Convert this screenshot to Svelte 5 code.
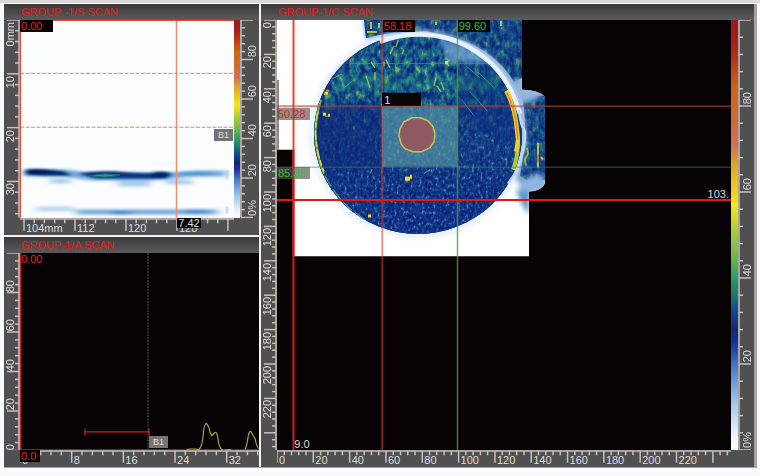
<script>
  const range = (from, to, step) => {
    const out = [];
    for (let i = 0; from + i * step <= to + 1e-6; i++) out.push(from + i * step);
    return out;
  };

  const axis = (side, min, max, first, major, parts, labels, flip = false) => {
    const at = (v) => {
      const p = ((v - min) / (max - min)) * 100;
      return flip ? 100 - p : p;
    };
    return {
      side,
      flip,
      ticks: range(first, max, major / parts).map((v, i) => ({ p: at(v), major: i % parts === 0 })),
      labels: labels.map(([v, text]) => ({ p: at(v), text: text ?? String(v) }))
    };
  };

  const plain = (values) => values.map((v) => [v]);

  const sDepth = axis('left', 0, 36.7, 0, 10, 5, [[0, '0mm'], [10], [20], [30]]);
  const sIndex = axis('bottom', 103.37, 136.95, 104, 8, 5, [[104, '104mm'], [112], [120], [128]]);
  const sAmp = axis('right', 0, 100, 0, 20, 5, [[0, '0%'], [20], [40], [60], [80]], true);
  const aAmp = axis('left', 0, 100, 0, 20, 5, plain([0, 20, 40, 60, 80]), true);
  const aPath = axis('bottom', 0, 37, 0, 8, 5, plain([0, 8, 16, 24, 32]));
  const cIndex = axis('left', 0, 250, 0, 20, 5, plain(range(0, 220, 20)));
  const cScan = axis('bottom', 0, 250, 0, 20, 5, plain(range(0, 220, 20)));
  const cAmp = axis('right', 0, 100, 0, 20, 5, [[0, '0%'], [20], [40], [60], [80]], true);
</script>

{#snippet ruler(a)}
  <div class="ruler {a.side}" class:flip={a.flip}>
    {#if a.side === 'bottom'}
      <svg viewBox="0 0 100 16" preserveAspectRatio="none" aria-hidden="true">
        <path d="M0 1H100" />
        {#each a.ticks as t}
          <path d="M{t.p} 1V{t.major ? 12 : 5}" />
        {/each}
      </svg>
      {#each a.labels as l}
        <span style="left: {l.p}%">{l.text}</span>
      {/each}
    {:else}
      <svg viewBox="0 0 16 100" preserveAspectRatio="none" aria-hidden="true">
        <path d={a.side === 'left' ? 'M15 0V100' : 'M1 0V100'} />
        {#each a.ticks as t}
          {#if a.side === 'left'}
            <path d="M15 {t.p}H{t.major ? 3 : 11}" />
          {:else}
            <path d="M1 {t.p}H{t.major ? 13 : 5}" />
          {/if}
        {/each}
      </svg>
      {#each a.labels as l}
        <span style={a.flip ? `bottom: ${100 - l.p}%` : `top: ${l.p}%`}>{l.text}</span>
      {/each}
    {/if}
  </div>
{/snippet}

<main class="page">
  <div class="frame">
    <div class="column">
      <section class="panel s-scan">
        <h2>GROUP -1/S SCAN</h2>
        {@render ruler(sDepth)}
        <div class="plot light">
          <svg viewBox="20 20 214 198" preserveAspectRatio="none" aria-hidden="true">
            <defs>
              <filter id="soft" x="-20%" y="-80%" width="140%" height="260%"><feGaussianBlur stdDeviation="4 1.6" /></filter>
              <filter id="soft2" x="-20%" y="-80%" width="140%" height="260%"><feGaussianBlur stdDeviation="2.5 1" /></filter>
            </defs>
            <g filter="url(#soft)">
              <path d="M24 170H68L88 173H170L196 171H226V177H196L150 181H90L64 177H24Z" fill="#6fabdf" />
              <path d="M50 179H70V184H50ZM118 181H150V187H118ZM166 180H192V185H166Z" fill="#a9cbe9" />
              <path d="M36 207H74V212H36Z" fill="#bcd8f0" />
              <path d="M76 210H130L176 210H218V215H176L130 215H76Z" fill="#74abde" />
              <ellipse cx="121" cy="213" rx="12" ry="2" fill="#3d86cb" />
              <ellipse cx="196" cy="212" rx="14" ry="2" fill="#3d86cb" />
              <ellipse cx="165" cy="163" rx="8" ry="1" fill="#eaf3fb" />
            </g>
            <g filter="url(#soft2)">
              <path d="M26 170Q40 168 64 172L72 176L44 176L26 175Z" fill="#062567" />
              <path d="M78 174Q104 170 128 173L150 174Q160 170 172 174L166 179H148L124 179H96Z" fill="#07307c" />
              <ellipse cx="38" cy="172.500" rx="11" ry="2.200" fill="#041c58" />
              <ellipse cx="160" cy="176" rx="9" ry="2.400" fill="#05205f" />
              <ellipse cx="196" cy="174" rx="18" ry="1.200" fill="#4a90d2" />
            </g>
            <path d="M90 176Q104 173 120 175.500Q104 179 90 176Z" fill="#2fa45f" stroke="#176c78" stroke-width="1" />
            <path d="M227 171V180M227 207V214" stroke="#a9cbe9" stroke-width="3" opacity="0.6" />
            <path d="M20 73.500H233M20 127.500H233" stroke="#f5795c" stroke-dasharray="4 1.500" />
            <path d="M176.500 20V218" stroke="#f58a68" stroke-width="1.500" />
            <path d="M20 20.500H234M20.500 20V218" stroke="#ee4a33" />
          </svg>
          <span class="tag red dark s-zero">0.00</span>
          <span class="gate s-gate">B1</span>
        </div>
        <div class="scale"></div>
        {@render ruler(sAmp)}
        <div class="foot">{@render ruler(sIndex)}<span class="tag white dark s-cursor">7.42</span></div>
      </section>

      <section class="panel a-scan">
        <h2>GROUP-1/A SCAN</h2>
        {@render ruler(aAmp)}
        <div class="plot">
          <svg viewBox="20 253 239 197" preserveAspectRatio="none" aria-hidden="true">
            <path d="M148 253V450" stroke="#54585a" stroke-dasharray="2 1" />
            <path d="M85 431.500H149M85 428V435M149 428V435" stroke="#c8201f" stroke-width="1.300" fill="none" />
            <path d="M20 449.500H259M20.500 253V450" stroke="#c8201f" stroke-width="1.500" />
            <path
              d="M187 449L189 448.500H196L199 449Q202 446 203 436Q204 423 206.500 423L209 427L210 432L212 435L215 432Q217 431 218 438Q219 448 223 450L228 449H231M245 449Q247 445 248 437Q249 430 251 431L253 435L255 438Q257 448 259 448"
              fill="none" stroke="#aaa438" stroke-width="1.200" />
          </svg>
          <span class="tag red a-zero">0.00</span>
          <span class="gate a-gate">B1</span>
        </div>
        <div class="foot">{@render ruler(aPath)}<span class="tag red dark a-origin">0.0</span></div>
      </section>
    </div>

    <section class="panel c-scan">
      <h2>GROUP-1/C SCAN</h2>
      {@render ruler(cIndex)}
      <div class="plot">
        <svg viewBox="277 20 454 431" preserveAspectRatio="none" aria-hidden="true">
          <defs>
            <filter id="deep" x="0" y="0" width="100%" height="100%" color-interpolation-filters="sRGB">
              <feTurbulence type="fractalNoise" baseFrequency="0.36 0.26" numOctaves="2" seed="4" />
              <feColorMatrix values="1.5 0 0 0 -0.42  1.5 0 0 0 -0.42  1.5 0 0 0 -0.42  0 0 0 0 1" />
              <feComponentTransfer>
                <feFuncR type="table" tableValues="0.05 0.06 0.08 0.15 0.36 0.5" />
                <feFuncG type="table" tableValues="0.13 0.17 0.22 0.33 0.53 0.65" />
                <feFuncB type="table" tableValues="0.42 0.49 0.55 0.62 0.75 0.82" />
              </feComponentTransfer>
              <feGaussianBlur stdDeviation="0.4" />
              <feComposite in2="SourceGraphic" operator="in" />
            </filter>
            <filter id="green" x="0" y="0" width="100%" height="100%" color-interpolation-filters="sRGB">
              <feTurbulence type="fractalNoise" baseFrequency="0.2 0.12" numOctaves="3" seed="11" />
              <feColorMatrix values="1.9 0 0 0 -0.5  1.9 0 0 0 -0.5  1.9 0 0 0 -0.5  0 0 0 0 1" />
              <feComponentTransfer>
                <feFuncR type="table" tableValues="0.05 0.06 0.09 0.11 0.18 0.6" />
                <feFuncG type="table" tableValues="0.14 0.22 0.33 0.46 0.58 0.76" />
                <feFuncB type="table" tableValues="0.44 0.50 0.55 0.54 0.48 0.30" />
              </feComponentTransfer>
              <feGaussianBlur stdDeviation="0.4" />
              <feComposite in2="SourceGraphic" operator="in" />
            </filter>
            <filter id="haze" x="-10%" y="-10%" width="120%" height="120%"><feGaussianBlur stdDeviation="2.500" /></filter>
            <filter id="edge" x="-10%" y="-10%" width="120%" height="120%"><feGaussianBlur stdDeviation="0.600" /></filter>
            <linearGradient id="fade" x1="0" y1="0" x2="0" y2="1">
              <stop offset="0" stop-color="#fff" stop-opacity="0.8" />
              <stop offset="0.28" stop-color="#fff" stop-opacity="0.9" />
              <stop offset="0.4" stop-color="#fff" stop-opacity="0.35" />
              <stop offset="0.65" stop-color="#fff" stop-opacity="0.15" />
              <stop offset="0.8" stop-color="#fff" stop-opacity="0" />
            </linearGradient>
            <mask id="upper"><rect x="300" y="30" width="250" height="210" fill="url(#fade)" /></mask>
            <clipPath id="disc"><ellipse cx="418" cy="134" rx="104" ry="100.500" /></clipPath>
            <clipPath id="sheet"><path d="M277 20H522V90Q538 90 545 97V184Q541 192 529 192V257H294V150H277Z" /></clipPath>
          </defs>

          <g clip-path="url(#sheet)">
            <rect x="277" y="20" width="270" height="240" fill="#fefeff" />
            <path d="M364 20H522V92H545V186L529 192L514 178Q530 130 505 80Q480 40 420 34Q385 34 366 40Z" fill="#6fa0d4" filter="url(#haze)" />
            <path d="M364 20H522V78L514 82Q490 40 425 31Q390 31 366 38Z" fill="#fff" filter="url(#deep)" />
            <path d="M364 20H522V78L514 82Q490 40 425 31Q390 31 366 38Z" fill="#fff" filter="url(#green)" opacity="0.5" />
            <path d="M522 96L545 96V180L529 182L520 176Q529 130 522 96Z" fill="#fff" filter="url(#deep)" />
            <path d="M522 96L545 96V180L529 182L520 176Q529 130 522 96Z" fill="#fff" filter="url(#green)" opacity="0.5" />
            <path d="M514 80H522V90H540V98L530 102L521 104Z" fill="#8fb6e0" filter="url(#haze)" />
            <path d="M526 200L518 186L530 176L543 174V192H529Z" fill="#8fb6e0" filter="url(#haze)" />
            <path d="M529 192V215L522 205L516 190Z" fill="#5b92cc" filter="url(#haze)" />
            <g fill="none" stroke="#c9cf3d" stroke-width="2" opacity="0.9">
              <path d="M371 22V29M379 23V28M436 22V25M501 21V26" />
              <path d="M367 32H377" />
              <path d="M527 148L528 154L525 160L526 166" stroke="#8fc14f" />
              <path d="M538 143V168" /><path d="M538 155V162" stroke="#e2742b" />
              <path d="M541 157L543 160" />
            </g>

            <ellipse cx="418" cy="134" rx="106" ry="102" fill="none" stroke="#d6e6f7" stroke-width="4" filter="url(#haze)" opacity="0.8" />
            <ellipse cx="418" cy="134" rx="104" ry="100.500" fill="#123086" />
            <g clip-path="url(#disc)">
              <rect x="313" y="33" width="212" height="203" fill="#fff" filter="url(#deep)" />
              <g mask="url(#upper)"><rect x="313" y="33" width="212" height="203" fill="#fff" filter="url(#green)" /></g>
              <path d="M438 38L457 42L500 63H450Z" fill="#6fa0d4" opacity="0.8" filter="url(#haze)" />
              <path d="M457 64H500L525 110V150L460 120Z" fill="#0f2c80" opacity="0.45" filter="url(#haze)" />
              <path d="M313 106H381V170H313Z" fill="#0d2678" opacity="0.5" filter="url(#haze)" />
              <path d="M340 76H500V90H330Z" fill="#2b8f80" opacity="0.28" filter="url(#haze)" />
              <path d="M350 63.500H500" stroke="#3b9a8d" opacity="0.7" />
              <g fill="none" stroke="#9cc64a" stroke-width="1.300">
                <path d="M386 60L390 68M384 62V66M371 62L375 68M394 46L390 54M398 40L396 47M404 50L402 54" />
                <path d="M366 76L370 88M375 72V80M436 78L434 86M441 82L444 90M437 86L441 92M446 62L449 66" />
                <path d="M470 92L488 112M462 100L474 116M478 72L494 88M466 66L480 78" stroke="#2f9580" stroke-width="1" />
                <path d="M330 80L342 74M344 88L354 80M430 170L424 174M370 174L372 170M354 126V130" stroke="#4fae6a" stroke-width="1" />
              </g>
              <g fill="#eddc2a">
                <path d="M405 177H410V181H405ZM410 175H412V179H410ZM368 215H371V218H368ZM324 92H328V95H324ZM323 113H326V116H323ZM328 114H330V117H328ZM445 61H448V64H445Z" />
                <path d="M326 90H329V92H326ZM325 116H328V117H325Z" fill="#e2742b" />
              </g>
              <ellipse cx="418" cy="134" rx="103.500" ry="100" fill="none" stroke="#153a8c" stroke-width="1.500" opacity="0.8" />
            </g>
            <path d="M380 42Q398 34.500 418 34.500A103 100 0 0 1 515 100L520 114" fill="none" stroke="#e9f2fc" stroke-width="4.500" filter="url(#edge)" />
            <path d="M519 110Q520 125 525 132Q525 145 523 152L517 171L508 184" fill="none" stroke="#c2d8f2" stroke-width="2.500" filter="url(#edge)" />
            <path d="M506 91Q514 106 516 122Q518 135 518 146Q517 160 513 170" fill="none" stroke="#b4c93e" stroke-width="4" />
            <path d="M507 91Q514 108 516 122L518 140L516 152" fill="none" stroke="#f1d21e" stroke-width="4" />
            <path d="M507 93Q514 108 516 122L518 140" fill="none" stroke="#e8802f" stroke-width="1.500" />
            <path d="M321 100Q315 120 315.500 134Q316 156 324 174" fill="none" stroke="#78b553" stroke-width="2" />
            <path d="M318 112Q315.500 122 315.500 134Q317 156 324 172" fill="none" stroke="#e8dc35" stroke-width="1.500" stroke-dasharray="9 2 5 3" />
            <path d="M325 176Q334 195 352 211L366 221" fill="none" stroke="#4aa673" stroke-width="1.200" stroke-dasharray="12 4" />

            <rect x="382" y="106" width="75" height="61" fill="#5a9fa6" opacity="0.62" />
            <path d="M412 118L420 118L428 121L433 127L435 134L434 142L430 148L422 152H413L405 149L401 144L399 136L400 129L404 122Z" fill="#8f5963" stroke="#c6c552" stroke-width="1.500" stroke-linejoin="round" />
          </g>

          <path d="M278 80V150" stroke="#1a1a1a" />
          <path d="M277 167.500H731" stroke="#2f8a42" opacity="0.7" />
          <path d="M457.500 20V451" stroke="#4f9a35" stroke-width="1.500" opacity="0.8" />
          <path d="M277 106.500H731" stroke="#c03a34" stroke-width="2" opacity="0.6" />
          <path d="M382.300 20V451" stroke="#d8402f" stroke-width="2" opacity="0.55" />
          <path d="M277 200.300H731" stroke="#e01a14" stroke-width="2" />
          <path d="M293.500 20V257" stroke="#f0452c" stroke-width="2" />
          <path d="M293.500 150V451" stroke="#d21d16" stroke-width="2" />
          <path d="M382 93H421V106H382Z" fill="#080405" />
        </svg>
        <span class="tag red dark c-x1">58.18</span>
        <span class="tag green dark c-x2">99.60</span>
        <span class="tag red faint c-y1">50.28</span>
        <span class="tag green faint c-y2">85.39</span>
        <span class="tag white c-box">1</span>
        <span class="tag white c-y">103.</span>
        <span class="tag white c-x">9.0</span>
      </div>
      <div class="scale"></div>
      {@render ruler(cAmp)}
      <div class="foot">{@render ruler(cScan)}</div>
    </section>
  </div>
</main>

<style>
  :global(body) {
    margin: 0;
    background: #fafbff;
  }
  .page {
    box-sizing: border-box;
    min-height: 100vh;
    padding: 1px 3px 8px 4px;
    display: flex;
    background: linear-gradient(#dcd8d8 3px, #fafbff 3px);
    font-family: 'Liberation Sans', Arial, sans-serif;
    font-size: 11px;
    line-height: 12px;
    color: #dedede;
  }
  .frame {
    flex: 1;
    display: grid;
    grid-template-columns: 255fr 493fr;
    gap: 2px;
    border: solid #aaa09e;
    border-width: 0 3px 1px 0;
    margin-top: 3px;
    background: #f4f2f2;
  }
  .column {
    display: grid;
    grid-template-rows: 1fr 1fr;
    gap: 2px;
  }
  .panel {
    display: grid;
    grid-template-rows: 16px 1fr 17px;
    background: #505050;
    min-width: 0;
  }
  .s-scan {
    grid-template-columns: 16px 1fr 6px 19px;
  }
  .a-scan {
    grid-template-columns: 16px 1fr;
  }
  .c-scan {
    grid-template-columns: 16px 1fr 7px 16px;
  }
  h2 {
    grid-column: 1 / -1;
    margin: 0;
    padding: 2px 0 0 17px;
    font: inherit;
    color: #e01f1c;
    background: linear-gradient(#3b3a3a, #5b5b5b);
  }
  .foot {
    grid-column: 2;
    position: relative;
    display: grid;
  }
  .plot {
    position: relative;
    background: #070304;
  }
  .plot.light {
    background: #fcfdff;
  }
  .plot svg,
  .ruler svg {
    position: absolute;
    inset: 0;
    width: 100%;
    height: 100%;
  }
  .ruler {
    position: relative;
  }
  .ruler.left svg,
  .ruler.right svg {
    width: 16px;
  }
  .ruler path {
    stroke: #c9bfbd;
    stroke-width: 1.5px;
    vector-effect: non-scaling-stroke;
  }
  .ruler span {
    position: absolute;
  }
  .ruler.bottom span {
    top: 4px;
    padding-left: 2px;
  }
  .ruler.left span,
  .ruler.right span {
    writing-mode: vertical-rl;
    transform: rotate(180deg);
    width: 12px;
  }
  .ruler.left span {
    left: 0;
    padding-bottom: 2px;
  }
  .ruler.left.flip span {
    padding: 0;
  }
  .ruler.right span {
    right: 1px;
    padding-top: 2px;
  }
  .scale {
    background: linear-gradient(
      #a1141c,
      #a8201c 6%,
      #d2640f 16%,
      #cf7055 29%,
      #e0a826 34%,
      #f3e81a 43%,
      #a0ca3a 50%,
      #6fb84a 55%,
      #2d9a6a 60%,
      #14706f 65%,
      #12429a 68%,
      #152a70 72%,
      #1232a0 75%,
      #4a80c8 81%,
      #a0c8ec 89%,
      #e8f2fc 96%,
      #fff
    );
  }
  .tag,
  .gate {
    position: absolute;
    padding: 0 1px;
  }
  .red {
    color: #e0231f;
  }
  .green {
    color: #2fc43a;
  }
  .white {
    color: #dedede;
  }
  .dark {
    background: #080405;
  }
  .faint {
    background: rgba(90, 80, 80, 0.65);
    padding-right: 4px;
  }
  .gate {
    width: 17px;
    background: #747474;
    color: #dedede;
    font-size: 9px;
    text-align: center;
  }
  .s-zero {
    left: 0;
    top: 0;
    padding-right: 11px;
  }
  .s-gate {
    right: 1px;
    top: 55%;
  }
  .s-cursor {
    left: 73.5%;
    top: 0;
    line-height: 10px;
  }
  .a-zero {
    left: 0;
    top: 0;
  }
  .a-gate {
    left: 54%;
    bottom: 2px;
  }
  .a-origin {
    left: 0;
    top: 0;
    padding-right: 4px;
  }
  .c-x1,
  .c-x2 {
    top: 0;
    padding-right: 4px;
  }
  .c-x1 {
    left: 23.3%;
  }
  .c-x2 {
    left: 39.8%;
  }
  .c-y1 {
    left: 0;
    top: 20.4%;
  }
  .c-y2 {
    left: 0;
    top: 34.3%;
  }
  .c-box {
    left: 23.4%;
    top: 17.2%;
  }
  .c-y {
    right: 1px;
    top: 39%;
  }
  .c-x {
    left: 3.6%;
    bottom: 0;
  }
</style>
